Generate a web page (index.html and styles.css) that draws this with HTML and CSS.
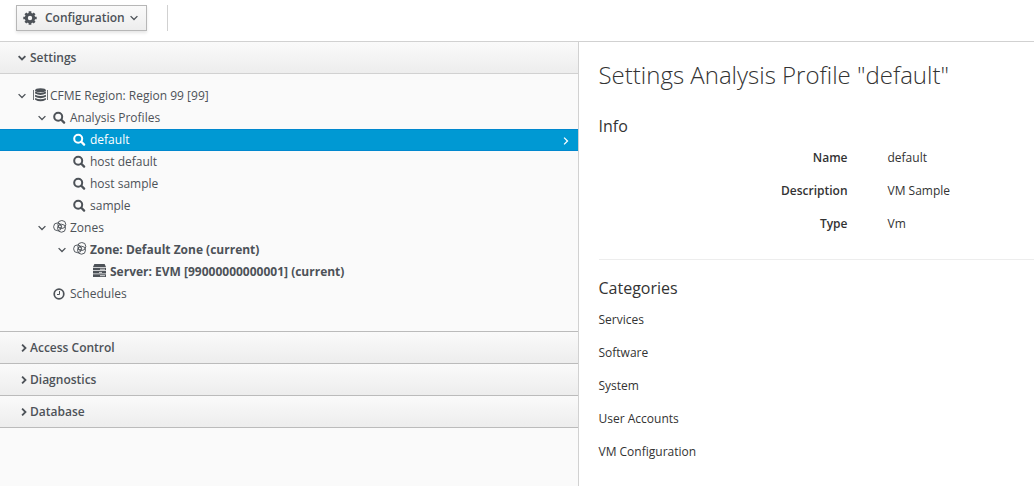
FILE: index.html
```html
<!DOCTYPE html>
<html lang="en">
<head>
<meta charset="utf-8">
<title>Configuration</title>
<link rel="stylesheet" href="styles.css">
</head>
<body>
<svg class="defs" width="0" height="0">
  <symbol id="down" viewBox="0 0 8 6"><path d="M.6 1.1 4 4.5 7.4 1.1" fill="none" stroke="currentColor"/></symbol>
  <symbol id="right" viewBox="0 0 6 8"><path d="M1.1.6 4.5 4 1.1 7.4" fill="none" stroke="currentColor"/></symbol>
  <symbol id="search" viewBox="0 0 13 13"><circle cx="5.2" cy="5.7" r="4" fill="none" stroke="currentColor" stroke-width="2"/><path d="m8.3 8.8 2.8 2.8" stroke="currentColor" stroke-width="2.3" stroke-linecap="round"/></symbol>
  <symbol id="zone" viewBox="0 0 14 13"><g fill="none" stroke="currentColor" stroke-width=".95"><circle cx="4.5" cy="6.8" r="3.9"/><circle cx="8.8" cy="4.5" r="4"/><circle cx="8.5" cy="8.2" r="4"/><circle cx="6.9" cy="6.5" r="1.7" stroke-width=".8"/></g></symbol>
  <symbol id="database" viewBox="0 0 15 14"><g fill="currentColor"><ellipse cx="7.5" cy="2.2" rx="5.4" ry="2"/><path d="M2.1 3.6q5.4 2.6 10.8 0v2q-5.4 2.9-10.8 0zM2.1 6.8q5.4 2.6 10.8 0v2q-5.4 2.9-10.8 0zM2.1 10q5.4 2.6 10.8 0v1.7q-5.4 3.3-10.8 0z"/></g><path d="M.5 2v10M14.5 2v10" stroke="currentColor" stroke-width=".8"/></symbol>
  <symbol id="server" viewBox="0 0 13 13"><g fill="currentColor"><path d="M1.4 0h10.2l1.4 3H0zM0 3.7h13v2.6H0zM0 7h13v2.6H0zM0 10.3h13V13H0z"/></g><path d="M7 5.2h5M6 8.4h3M7 11.7h5" stroke="#fafafa" stroke-width=".8"/></symbol>
  <symbol id="clock" viewBox="0 0 12 12"><circle cx="6" cy="6" r="4.8" fill="none" stroke="currentColor" stroke-width="1.7"/><path d="M6.5 3v3.5H4" fill="none" stroke="currentColor"/></symbol>
  <symbol id="gear" viewBox="0 0 14 14"><path d="M7 .3v13.4M.3 7h13.4M2.4 2.4l9.2 9.2M11.6 2.4l-9.2 9.2" stroke="currentColor" stroke-width="2.7"/><circle cx="7" cy="7" r="3.8" fill="none" stroke="currentColor" stroke-width="2.8"/><circle cx="7" cy="7" r="2.2" fill="#f5f5f5"/></symbol>
</svg>
<header class="toolbar">
  <button class="button"><svg class="gear"><use href="#gear"/></svg><span>Configuration</span><svg class="down"><use href="#down"/></svg></button>
  <span class="divider"></span>
</header>
<div class="layout">
  <nav class="sidebar">
    <h2 class="panel open"><svg class="down"><use href="#down"/></svg>Settings</h2>
    <ul class="tree">
      <li class="node level-0"><svg class="down"><use href="#down"/></svg><svg class="database"><use href="#database"/></svg>CFME Region: Region 99 [99]</li>
      <li class="node level-1"><svg class="down"><use href="#down"/></svg><svg class="icon"><use href="#search"/></svg>Analysis Profiles</li>
      <li class="node level-2 selected"><svg class="icon"><use href="#search"/></svg>default<svg class="right"><use href="#right"/></svg></li>
      <li class="node level-2"><svg class="icon"><use href="#search"/></svg>host default</li>
      <li class="node level-2"><svg class="icon"><use href="#search"/></svg>host sample</li>
      <li class="node level-2"><svg class="icon"><use href="#search"/></svg>sample</li>
      <li class="node level-1"><svg class="down"><use href="#down"/></svg><svg class="zone"><use href="#zone"/></svg>Zones</li>
      <li class="node level-2 parent current"><svg class="down"><use href="#down"/></svg><svg class="zone"><use href="#zone"/></svg>Zone: Default Zone (current)</li>
      <li class="node level-3 current"><svg class="icon server"><use href="#server"/></svg>Server: EVM [99000000000001] (current)</li>
      <li class="node level-1 leaf"><svg class="icon clock"><use href="#clock"/></svg>Schedules</li>
    </ul>
    <h2 class="panel"><svg class="right"><use href="#right"/></svg>Access Control</h2>
    <h2 class="panel"><svg class="right"><use href="#right"/></svg>Diagnostics</h2>
    <h2 class="panel"><svg class="right"><use href="#right"/></svg>Database</h2>
  </nav>
  <main class="content">
    <h1 class="title">Settings Analysis Profile "default"</h1>
    <h3 class="heading">Info</h3>
    <dl class="details">
      <dt>Name</dt><dd>default</dd>
      <dt>Description</dt><dd>VM Sample</dd>
      <dt>Type</dt><dd>Vm</dd>
    </dl>
    <hr class="rule">
    <h3 class="heading">Categories</h3>
    <ul class="categories"><li>Services</li><li>Software</li><li>System</li><li>User Accounts</li><li>VM Configuration</li></ul>
  </main>
</div>
</body>
</html>
```
FILE: styles.css
```css
* { box-sizing: border-box; margin: 0; padding: 0; }
body { height: 486px; overflow: hidden; background: #fff; color: #333; font: 12px/22px "Open Sans", sans-serif; }
.defs { display: none; }
svg { flex: none; }
.toolbar { display: flex; height: 42px; padding: 5px 16px; border-bottom: 1px solid #d1d1d1; }
.button { display: flex; align-items: center; width: 131px; height: 26px; padding-left: 6px; border: 1px solid #b7b7b7; background: linear-gradient(#fafafa, #ededed); box-shadow: 0 2px 3px rgba(0,0,0,.1); color: #4d5258; font: 600 12px/22px "Open Sans", sans-serif; }
.button .gear { width: 14px; height: 14px; margin-right: 8px; }
.button .down { margin-left: 5px; stroke-width: 1.3; }
.divider { width: 1px; height: 26px; margin-left: 20px; background: #d1d1d1; }
.down { width: 8px; height: 6px; }
.right { width: 6px; height: 8px; }
.layout { display: flex; height: 444px; }
.sidebar { width: 579px; border-right: 1px solid #d1d1d1; background: #fafafa; color: #4d5258; }
.panel { display: flex; align-items: center; height: 32px; padding-left: 21px; border-bottom: 1px solid #bbb; background: linear-gradient(#fafafa, #ededed); font-size: 12px; font-weight: 600; }
.panel.open { padding-left: 18px; border-bottom-color: #d1d1d1; }
.panel .down { margin-right: 4px; stroke-width: 1.8; }
.panel .right { margin-right: 3px; stroke-width: 1.8; }
.tree { height: 258px; padding-top: 11px; border-bottom: 1px solid #bbb; list-style: none; }
.node { display: flex; align-items: center; height: 22px; white-space: pre; }
.node > .down { margin-right: 7px; stroke-width: 1.3; }
.icon { width: 13px; height: 13px; margin-right: 4px; margin-bottom: 1px; }
.zone { width: 14px; height: 13px; margin-right: 3px; margin-bottom: 3px; }
.database { width: 15px; height: 14px; margin-right: 2px; margin-bottom: 2px; }
.level-0 { padding-left: 18px; }
.level-1 { padding-left: 38px; }
.level-2 { padding-left: 73px; }
.level-3 { padding-left: 93px; }
.level-1.leaf { padding-left: 53px; }
.level-2.parent { padding-left: 58px; }
.server { margin-bottom: 3px; }
.clock { width: 12px; height: 12px; margin-right: 5px; margin-bottom: 0; }
.current { font-weight: 700; }
.selected { border: solid #0088ce; border-width: 1px 0; background: #0099d3; color: #fff; }
.selected .right { margin-left: auto; margin-right: 9px; margin-top: 2px; stroke-width: 1.3; }
.content { flex: 1; padding: 16px 0 0 20px; }
.title { height: 33px; margin-left: -.5px; font-size: 24px; line-height: 33px; font-weight: 300; white-space: nowrap; }
.heading { font-size: 16px; line-height: 22px; font-weight: 400; margin-left: -.5px; }
.title + .heading { margin-top: 24px; }
.details { display: grid; grid-template-columns: 248.5px 1fr; grid-auto-rows: 33px; column-gap: 40px; margin-top: 4px; line-height: 33px; }
.details dt { text-align: right; font-weight: 600; }
.rule { height: 1px; margin: 19px 0 17px; border: 0; background: #ededed; }
.categories { margin-top: 4px; margin-left: -.5px; list-style: none; line-height: 33px; }
```
